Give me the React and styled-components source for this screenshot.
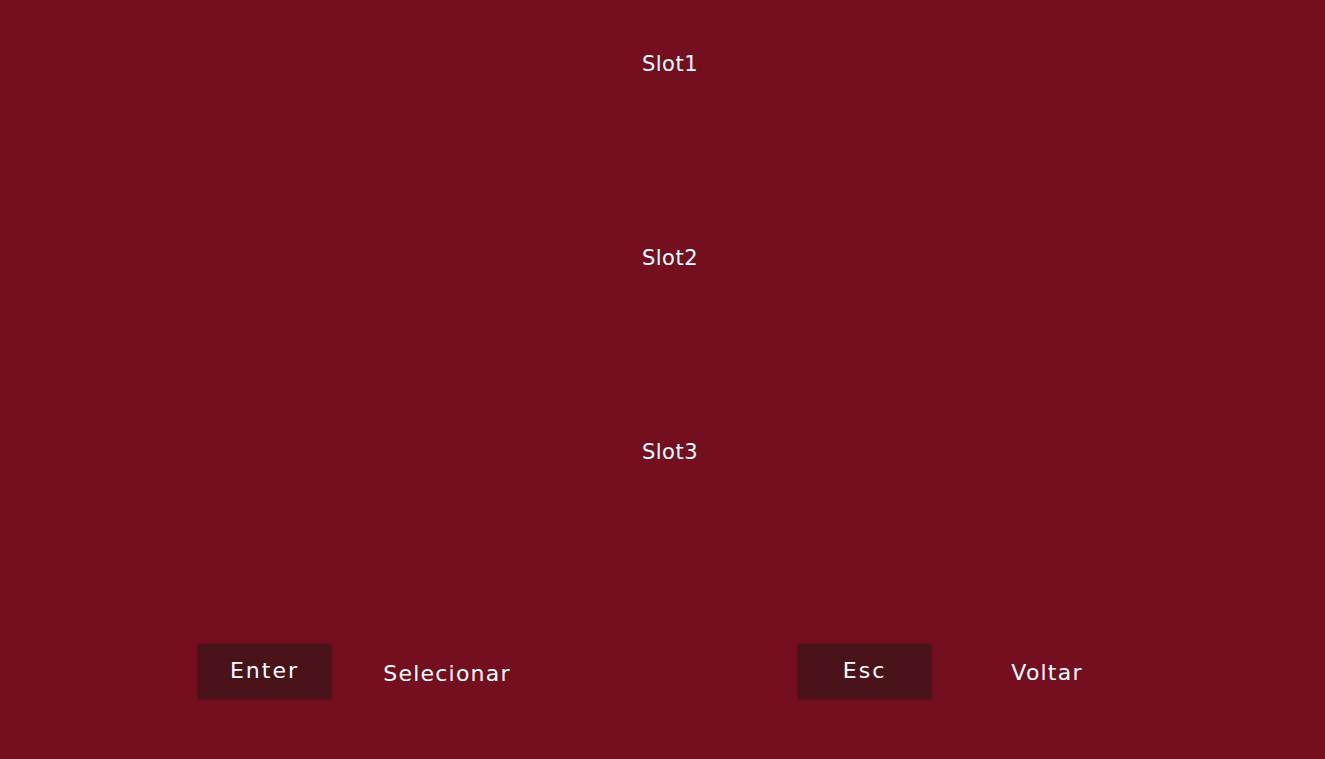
import React from "react";
import styled, { createGlobalStyle } from "styled-components";

const Global = createGlobalStyle`
  html, body { margin: 0; padding: 0; background: #730f1f; }
  body { font-family: "DejaVu Sans", "Liberation Sans", sans-serif; color: #ffffff; }
`;

const Screen = styled.div`
  width: 1325px;
  height: 759px;
  background: #730f1f;
  display: flex;
  flex-direction: column;
  padding-top: 52px;
  box-sizing: border-box;
  overflow: hidden;
`;

const SlotList = styled.div`
  display: flex;
  flex-direction: column;
  align-items: center;
  gap: 170px;
  padding-left: 15px;
`;

const Slot = styled.div`
  font-size: 21px;
  line-height: 24px;
  height: 24px;
  color: #fff;
  letter-spacing: 0.5px;
`;

const Footer = styled.div`
  margin-top: 179px;
  display: flex;
  padding-left: 198px;
  gap: 235px;
`;

const Group = styled.div`
  display: flex;
  align-items: center;
  width: 365px;
`;

const Key = styled.div`
  width: 133px;
  height: 55px;
  background: #4a1219;
  box-shadow: 0 0 2px rgba(40, 5, 10, 0.6);
  display: flex;
  align-items: center;
  justify-content: center;
  font-size: 22px;
  letter-spacing: 2px;
  color: #fff;
  padding-bottom: 2px;
  box-sizing: border-box;
  margin-top: ${(p) => p.$offset || 0}px;
`;

const Label = styled.div`
  flex: 1;
  text-align: center;
  font-size: 22px;
  letter-spacing: 1.2px;
  color: #fff;
  padding-top: ${(p) => p.$down || 0}px;
`;

export default function App() {
  return (
    <>
      <Global />
      <Screen>
        <SlotList>
          <Slot>Slot1</Slot>
          <Slot>Slot2</Slot>
          <Slot>Slot3</Slot>
        </SlotList>
        <Footer>
          <Group>
            <Key>Enter</Key>
            <Label $down={4}>Selecionar</Label>
          </Group>
          <Group>
            <Key $offset={1}>Esc</Key>
            <Label $down={2}>Voltar</Label>
          </Group>
        </Footer>
      </Screen>
    </>
  );
}
